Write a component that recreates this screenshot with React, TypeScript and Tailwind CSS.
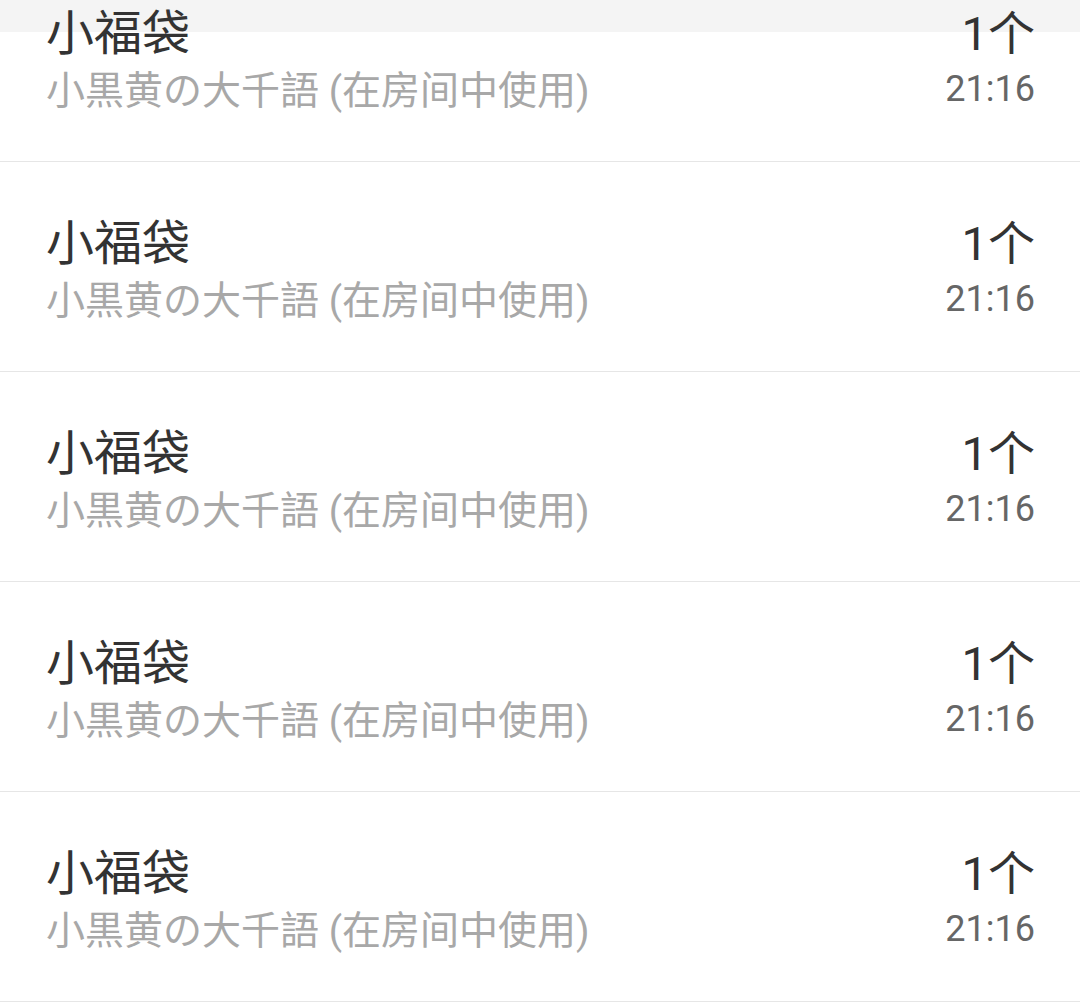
import React from "react";

const rows = Array.from({ length: 5 });

export default function App() {
  return (
    <div
      className="relative min-h-screen bg-white overflow-hidden"
      style={{ fontFamily: "Roboto, 'Noto Sans CJK SC', sans-serif" }}
    >
      <div className="absolute top-0 inset-x-0 h-8 bg-[#f4f4f4]" />
      <div className="relative -mt-[48px]">
        {rows.map((_, i) => (
          <div
            key={i}
            className="flex justify-between items-start h-[210px] pl-[46px] pr-[45px] pt-[58px] border-b border-[#e6e6e6]"
          >
            <div className="flex flex-col">
              <div className="text-[48px] leading-none text-[#333333]">小福袋</div>
              <div className="mt-[14px] text-[39px] leading-none text-[#a8a8a8]">
                小黒黄の大千語 (在房间中使用)
              </div>
            </div>
            <div className="flex flex-col items-end">
              <div className="text-[47px] leading-none text-[#333333]">1个</div>
              <div className="mt-[14px] text-[36px] leading-none text-[#666666]">21:16</div>
            </div>
          </div>
        ))}
      </div>
    </div>
  );
}
